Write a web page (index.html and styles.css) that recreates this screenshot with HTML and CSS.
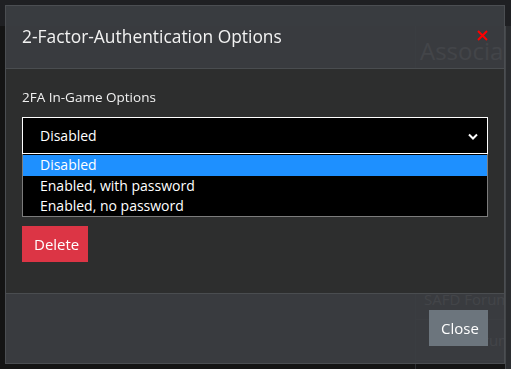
FILE: index.html
```html
<!doctype html>
<html lang="en">
    <head>
        <title>2-Factor-Authentication Options</title>
        <meta charset="UTF-8"/>
        <link rel="stylesheet" href="styles.css">
    </head>
    <body>
        <div class="topbar"></div>
        <div class="page">
            <div class="side"></div>
            <div class="main">
                <h2 class="page-title">Associat</h2>
                <div class="table">
                    <div class="row">Status</div>
                    <div class="row">Member</div>
                    <div class="row">Rank</div>
                    <div class="row">Joined</div>
                    <div class="row">Group</div>
                    <div class="row">SAFD Forum</div>
                    <div class="row row-indent">Forum</div>
                </div>
            </div>
            <div class="edge"></div>
        </div>

        <div class="modal">
            <div class="modal-header">
                <h3 class="modal-title">2-Factor-Authentication Options</h3>
                <button class="close-x" aria-label="Close">
                    <svg width="11" height="11" viewBox="0 0 11 11"><path d="M1 1 L10 10 M10 1 L1 10" stroke="#ff0000" stroke-width="2"/></svg>
                </button>
            </div>
            <div class="modal-body">
                <label class="field-label">2FA In-Game Options</label>
                <div class="select-wrap">
                    <div class="select">
                        <span>Disabled</span>
                        <svg class="chevron" width="10" height="7" viewBox="0 0 10 7"><path d="M1 1.5 L5 5.5 L9 1.5" fill="none" stroke="#ffffff" stroke-width="2"/></svg>
                    </div>
                    <ul class="listbox">
                        <li class="selected">Disabled</li>
                        <li>Enabled, with password</li>
                        <li>Enabled, no password</li>
                    </ul>
                </div>
                <button class="btn btn-danger">Delete</button>
            </div>
            <div class="modal-footer">
                <button class="btn btn-secondary">Close</button>
            </div>
        </div>
    </body>
</html>
```

FILE: styles.css
```css
body {
    margin: 0;
    background-color: #141414;
    font-family: "Open Sans", "Noto Sans", sans-serif;
    color: #ffffff;
    overflow: hidden;
}
.topbar {
    height: 26px;
    background-color: #1f2023;
}
.page {
    display: grid;
    grid-template-columns: 415px 90px 1fr;
    height: 343px;
}
.main {
    border-left: 1px solid #2e3033;
    overflow: hidden;
}
.page-title {
    margin: 10px 0 0 4px;
    height: 30px;
    line-height: 30px;
    font-size: 24px;
    font-weight: normal;
    color: #b4b4b4;
    white-space: nowrap;
}
.table {
    margin-top: 8px;
}
.row {
    height: 41px;
    line-height: 41px;
    padding-left: 8px;
    font-size: 15px;
    color: #b0b0b0;
    border-bottom: 1px solid #34373a;
    box-sizing: border-box;
    white-space: nowrap;
}
.row-indent {
    padding-left: 50px;
}
.edge {
    background-color: #2b2d30;
    border-left: 1px solid #44474a;
}

.modal {
    position: fixed;
    top: 5px;
    left: 5px;
    width: 498px;
    height: 357px;
    border: 1px solid #4b4e52;
    display: flex;
    flex-direction: column;
}
.modal-header {
    position: relative;
    display: flex;
    align-items: center;
    padding: 0 16px 3px;
    box-sizing: border-box;
    height: 63px;
    background-color: rgba(59, 62, 66, 0.94);
    border-bottom: 1px solid #4a4d50;
}
.modal-title {
    margin: 0;
    font-size: 17.4px;
    font-weight: normal;
    color: #f2f2f2;
}
.close-x {
    position: absolute;
    top: 24px;
    right: 16px;
    padding: 0;
    border: 0;
    background: none;
    line-height: 0;
}
.modal-body {
    flex-grow: 1;
    padding: 18px 16px 0;
    background-color: #2d2e2e;
}
.field-label {
    display: block;
    font-size: 13.5px;
    line-height: 20px;
    color: #f0f0f0;
}
.select-wrap {
    position: relative;
    margin-top: 10px;
}
.select {
    display: flex;
    align-items: center;
    justify-content: space-between;
    height: 35px;
    padding: 0 9px 0 17px;
    background-color: #000000;
    border: 1px solid #ffffff;
    font-size: 14px;
}
.chevron {
    margin-top: 1px;
}
.listbox {
    position: absolute;
    top: 37px;
    left: 0;
    right: 0;
    margin: 0;
    padding: 1px 0 0;
    list-style: none;
    background-color: #000000;
    border: 1px solid #7c7c7c;
    border-top: 0;
    font-size: 14px;
}
.listbox li {
    height: 20px;
    line-height: 20px;
    padding-left: 17px;
}
.listbox .selected {
    height: 21px;
    background-color: #1e90ff;
}
.btn {
    padding: 0 12px;
    height: 36px;
    border: 0;
    font-family: "Open Sans", "Noto Sans", sans-serif;
    font-size: 15px;
    color: #ffffff;
}
.btn-danger {
    margin-top: 72px;
    width: 66px;
    background-color: #dc3545;
}
.modal-footer {
    display: flex;
    justify-content: flex-end;
    padding: 16px 16px 17px;
    background-color: rgba(59, 62, 66, 0.94);
    border-top: 1px solid #4a4d50;
}
.btn-secondary {
    width: 59px;
    background-color: #6c757d;
}
```
